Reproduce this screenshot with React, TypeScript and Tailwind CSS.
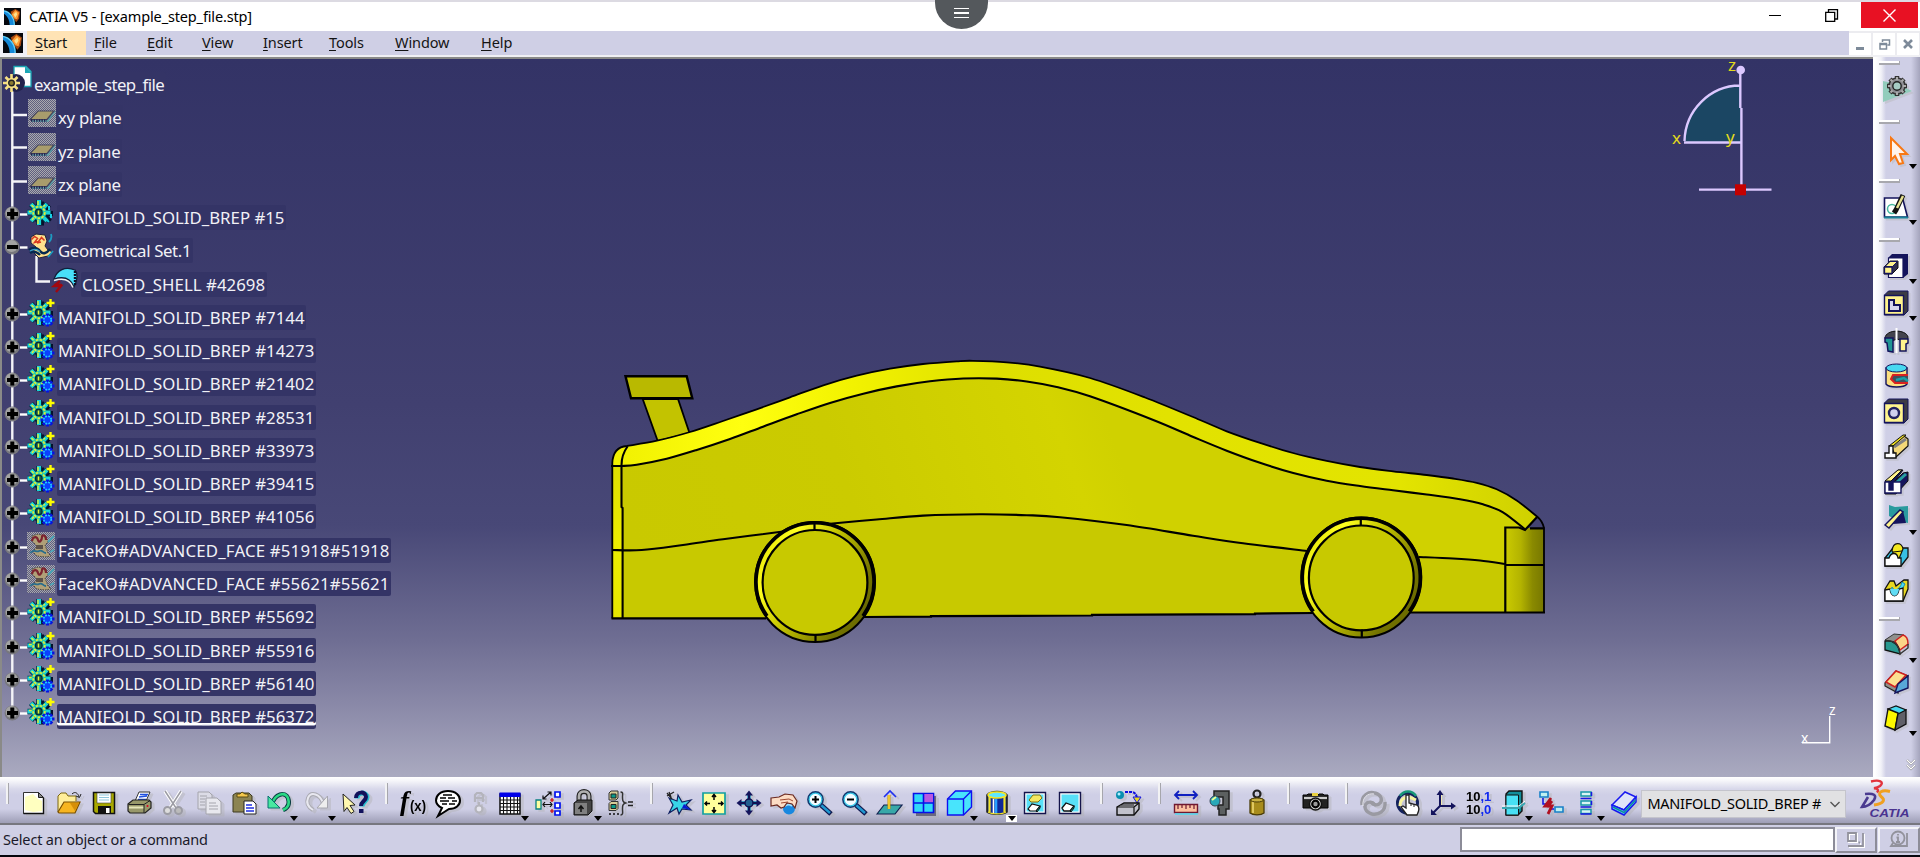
import type { ReactNode } from "react";

type Pt = [number, number];

/* Smooth path through a list of points (Catmull-Rom as cubic Béziers). */
function spline(points: Pt[], start = "M"): string {
  let d = `${start}${points[0][0]} ${points[0][1]}`;
  for (let i = 0; i < points.length - 1; i++) {
    const p0 = points[Math.max(i - 1, 0)];
    const p1 = points[i];
    const p2 = points[i + 1];
    const p3 = points[Math.min(i + 2, points.length - 1)];
    const c1x = p1[0] + (p2[0] - p0[0]) / 6;
    const c1y = p1[1] + (p2[1] - p0[1]) / 6;
    const c2x = p2[0] - (p3[0] - p1[0]) / 6;
    const c2y = p2[1] - (p3[1] - p1[1]) / 6;
    d += `C${c1x} ${c1y} ${c2x} ${c2y} ${p2[0]} ${p2[1]}`;
  }
  return d;
}

const ROOF: Pt[] = [
  [627, 446], [657, 440.7], [690, 432], [723, 421], [756.7, 409.3], [790, 397.3], [823.3, 385.3],
  [856.7, 375.7], [890, 368.7], [923, 364], [956.7, 361.3], [973, 360.8], [1006.7, 362.3],
  [1040, 366.7], [1090, 378], [1145, 397.5], [1200, 420], [1226.7, 431.3], [1260, 442.9],
  [1293, 453], [1326.7, 460.9], [1360, 467], [1393, 471.3], [1426.7, 475], [1453, 478.5],
  [1476.7, 482.8], [1496.7, 489.3], [1516.7, 500.5], [1537.3, 516.7],
];
const SHOULDER: Pt[] = [
  [621.7, 466], [636.7, 464.7], [666.7, 458.7], [696.7, 450], [730, 439], [763, 426.7],
  [796.7, 414.3], [830, 402.9], [863.3, 393.7], [896.7, 386.4], [930, 381.3], [963.3, 378.5],
  [996.7, 378.6], [1026.7, 381.5], [1056.7, 387], [1090, 396.3], [1153.3, 420], [1193.3, 437],
  [1226.7, 450.7], [1260, 462.8], [1293.3, 473], [1326.7, 480.7], [1360, 486], [1393, 490.3],
  [1426.7, 494.5], [1460, 499.2], [1483, 504.3], [1503, 512.3], [1525, 529.3],
];
const WAIST_A: Pt[] = [[612, 550], [641.7, 550], [683, 545], [723, 539.3], [783, 531.5]];
const WAIST_B: Pt[] = [
  [830, 523.8], [876.7, 519.5], [923, 515.6], [980, 514.3], [1026.7, 515.2], [1060, 517.2],
  [1126.7, 525], [1193, 535.7], [1243, 543.3], [1307, 551],
];
const WAIST_C: Pt[] = [[1419, 557], [1453, 558.5], [1480, 560.5], [1505, 564]];

const CORNER = "M612.3 618.3V463Q613 447 627 446";

function Wheel({ cx, cy, bottomGap }: { cx: number; cy: number; bottomGap: number }) {
  return (
    <g fill="none" stroke="#000">
      <circle cx={cx} cy={cy} r={60} fill="url(#tyre)" strokeWidth={2} />
      <path
        d={`M${cx - 48} ${cy + bottomGap}A59 59 0 1 1 ${cx + 48} ${cy + bottomGap}`}
        strokeWidth={3.6}
      />
      <circle cx={cx} cy={cy + 0.4} r={52.4} fill="#c8c900" strokeWidth={2.2} />
      <path d={`M${cx - 0.5} ${cy - 60}v8M${cx + 0.5} ${cy + 52}v8`} strokeWidth={2.2} />
    </g>
  );
}

function Scene() {
  return (
    <svg
      className="absolute left-0 top-0 h-[718px] w-[1871px]"
      viewBox="2 59 1871 718"
      fontFamily="'Noto Sans', sans-serif"
    >
      <defs>
        <linearGradient id="roof" gradientUnits="userSpaceOnUse" x1="612" y1="0" x2="1540" y2="0">
          <stop offset="0" stopColor="#f0f000" />
          <stop offset=".14" stopColor="#ffff10" />
          <stop offset=".26" stopColor="#f2f200" />
          <stop offset=".42" stopColor="#dedf00" />
          <stop offset=".6" stopColor="#e2e200" />
          <stop offset=".85" stopColor="#e3e400" />
          <stop offset="1" stopColor="#cfd000" />
        </linearGradient>
        <linearGradient id="side" gradientUnits="userSpaceOnUse" x1="640" y1="560" x2="1100" y2="400">
          <stop offset="0" stopColor="#c9c900" />
          <stop offset=".45" stopColor="#cbcb00" />
          <stop offset=".9" stopColor="#d4d400" />
          <stop offset="1" stopColor="#d0d100" />
        </linearGradient>
        <linearGradient id="nose" x1="0" x2="1" y1="0" y2="0">
          <stop offset="0" stopColor="#cbcb00" />
          <stop offset=".4" stopColor="#b3b300" />
          <stop offset=".7" stopColor="#8a8a00" />
          <stop offset="1" stopColor="#777700" />
        </linearGradient>
        <linearGradient id="tyre" x1="0" x2="1" y1=".2" y2=".8">
          <stop offset="0" stopColor="#e0e000" />
          <stop offset=".2" stopColor="#ffff20" />
          <stop offset=".45" stopColor="#c4c400" />
          <stop offset=".8" stopColor="#747400" />
          <stop offset="1" stopColor="#666600" />
        </linearGradient>
        <linearGradient id="rear" x1="0" x2="0" y1="0" y2="1">
          <stop offset="0" stopColor="#dede00" />
          <stop offset=".5" stopColor="#ecec00" />
          <stop offset="1" stopColor="#e6e600" />
        </linearGradient>
      </defs>

      {/* spoiler */}
      <g stroke="#000" strokeWidth="2.4">
        <path d="M642.7 399L657.7 441L689.5 433L678 399Z" fill="#c3c300" strokeWidth="1.8" />
        <path d="M625.5 376.3H686.7L692.3 398.3H631Z" fill="#b9b900" />
      </g>

      {/* body */}
      <path
        d={`${CORNER}${spline(ROOF, "L")}L1525 529.5L1544 528V612.4L1312 612.8L1255 614L1090 615.3L932 616.3L863 617L612.3 618.3Z`}
        fill="url(#roof)"
      />
      <path
        d={`${spline(SHOULDER)}L1505 528V612.5L1312 612.8L1090 615.3L863 617L622 618.3Z`}
        fill="url(#side)"
      />
      <path
        d={`${spline(WAIST_A)}L${WAIST_B[0].join(" ")}${spline(WAIST_B, "L")}L1419 557${spline(WAIST_C, "L")}V612.5L1312 612.8L1090 615.3L863 617L622 618.3V550Z`}
        fill="#c8c900"
      />
      <path d="M612.3 466H622V618.3H612.3Z" fill="url(#rear)" />
      <path d="M1505.3 528H1544V612.4H1505.3Z" fill="url(#nose)" />
      <path d="M1528 527.5L1537.3 517L1543.5 527.5Z" fill="#444473" />

      <g fill="none" stroke="#000" strokeWidth="2.1">
        <path d={`${CORNER}${spline(ROOF, "L")}Q1542.5 521 1544 528V612.4`} strokeWidth="1.8" />
        <path d={spline(SHOULDER)} />
        <path d={spline(WAIST_A)} />
        <path d={spline(WAIST_B)} />
        <path d={spline(WAIST_C)} />
        <path d="M611 466H622M627.500 446.500Q621.300 455 621.500 466V507L622.600 508V618" />
        <path
          d="M611.5 618.3H766M863 617L931 616.6V616.2L1092 615.5V614.8L1255 614.2V613.6L1314 613M1410 612.5H1545"
          strokeWidth="2.2"
        />
        <path d="M1505.3 612V527.5H1519L1525 530L1537.3 516.7M1530 528.3H1544.5M1505 565H1544" strokeWidth="2.2" />
      </g>

      <Wheel cx={815} cy={582} bottomGap={34} />
      <Wheel cx={1361.3} cy={577.5} bottomGap={34} />

      {/* compass */}
      <path d="M1740 85.5A56 57 0 0 0 1684.5 142.3H1741Z" fill="#1b4663" />
      <g stroke="#dcc8ff" fill="none" strokeWidth="2.4">
        <path d="M1740 85.5A56 57 0 0 0 1684.5 141M1684 142.5H1741M1740.3 70V108M1741.4 108V186" />
        <path d="M1699 189.6H1771.5" />
      </g>
      <circle cx="1740.7" cy="70" r="4.3" fill="#dcc8ff" />
      <rect x="1735" y="184.3" width="11" height="11" fill="#c40000" />
      <g fill="#e2da1c" fontSize="17">
        <text x="1728" y="71">z</text>
        <text x="1672" y="143.5">x</text>
        <text x="1726" y="143">y</text>
      </g>

      {/* view axes */}
      <path d="M1802 742.7H1829.7V716" fill="none" stroke="#fff" strokeWidth="1.4" />
      <g fill="#fff" fontSize="14">
        <text x="1829" y="714.5">z</text>
        <text x="1801" y="743">x</text>
      </g>

      {/* tree trunk and branches */}
      <g stroke="#f4f4f8" strokeWidth="2.4" fill="none">
        <path d="M12.3 90V713" />
        <path d="M12 115H27M12 147.5H27M12 181.5H27" />
        <path d="M36.5 256V281.5H50" />
      </g>
    </svg>
  );
}

/* ---------- tree ---------- */

function Svg({ children, size = "h-6 w-6", box = "0 0 24 24" }: { children: ReactNode; size?: string; box?: string }) {
  return (
    <svg viewBox={box} className={`${size} shrink-0 overflow-visible`} fill="none" stroke="none">
      {children}
    </svg>
  );
}

const BODY_TEETH = "M11 0v25M-.5 12.500h23M3 4l16 17M19 4L3 21";

function BodyIcon({ plus }: { plus?: boolean }) {
  return (
    <Svg size="h-[26px] w-[27px]" box="0 0 27 26">
      <g stroke="#04122c" strokeWidth="5" transform="translate(2.500 .5)">
        <path d="M11 1v24M1.500 13h21M4.500 5l15 16M18.500 4.500L5 21" />
      </g>
      <path d={BODY_TEETH} stroke="#063044" strokeWidth="5.600" />
      <path d={BODY_TEETH} stroke="#18d4d8" strokeWidth="4" />
      <path d="M10 1v5M1 11.500h5M3.500 5l4 4M17 5l-4 4M4 20l3-4M10 19v5" stroke="#e4ee30" strokeWidth="1.400" />
      <circle cx="11" cy="12.500" r="7.400" fill="#20c8b0" />
      <circle cx="11" cy="12.500" r="5.800" stroke="#e8ee30" strokeWidth="1.700" strokeDasharray="2.500 1.400" />
      <circle cx="10.800" cy="12.500" r="3.300" fill="#0d5c48" stroke="#062838" strokeWidth="1.300" />
      <path d="M10.500 10.500v4" stroke="#e8ee30" strokeWidth="1.500" />
      {plus ? (
        <g>
          <path d="M19.500 13.500v13M12.500 20h14M14.900 15.300l9.200 9.400M24.100 15.300l-9.200 9.400" stroke="#0614e0" strokeWidth="3.200" />
          <circle cx="19.500" cy="20" r="3.800" fill="#0a40ff" stroke="#22c8ff" strokeWidth="1.700" strokeDasharray="2 1" />
          <path d="M22.500 -1v8M18.500 3h8" stroke="#ffff00" strokeWidth="2.400" />
        </g>
      ) : (
        <path d="M21 6v4M23 14v4M19 20l2 2" stroke="#18d0e8" strokeWidth="2" />
      )}
    </Svg>
  );
}

function Dither({ children }: { children: ReactNode }) {
  return (
    <Svg size="h-[28px] w-[28px]" box="0 0 28 28">
      <defs>
        <pattern id="dither" width="2" height="2" patternUnits="userSpaceOnUse">
          <rect width="2" height="2" fill="#5f5f80" />
          <rect width="1" height="1" fill="#a9a9ad" />
          <rect x="1" y="1" width="1" height="1" fill="#a9a9ad" />
        </pattern>
      </defs>
      <rect width="28" height="28" fill="url(#dither)" />
      {children}
    </Svg>
  );
}

function PlaneIcon() {
  return (
    <Dither>
      <path d="M3 22h17l7-10" stroke="#58a0a8" strokeWidth="1.500" />
      <path d="M2 20.500L10 12h16l-7 8.500z" fill="#a89c6c" stroke="#44445e" strokeWidth="1.200" />
      <path d="M3 21.500h16" stroke="#20204c" strokeWidth="2.600" strokeDasharray="1.400 1.200" />
    </Dither>
  );
}

function FaceIcon() {
  return (
    <Dither>
      <path d="M5 4l6-2 8 2 2 6-3 3 3 8 3 3-6 1-8-1-4-4 4-6-5-5z" fill="#b0a078" stroke="#4a4640" strokeDasharray="1.500 1" />
      <path d="M5 9c1-5 5-5 6-1s4 0 4-3 4-2 4 3" stroke="#7c2430" strokeWidth="2.200" />
      <path d="M3 21c4-5 6 0 9-2s4 2 7 2" stroke="#276d8c" strokeWidth="1.800" />
      <path d="M9 13h7v4H9z" fill="#5c5048" />
      <path d="M21 10l6-6M23 20l4-2" stroke="#4aa6b8" strokeWidth="1.800" />
    </Dither>
  );
}

function GeoSetIcon() {
  return (
    <Svg size="h-[26px] w-[26px]" box="0 0 26 26">
      <path d="M3 4l5-3 9 1 2 6-2 5 3 4 5 2-5 4-9 2-6-6 3-5-5-4z" fill="#ffe08c" stroke="#22223c" />
      <path d="M3.500 6.500l3-3 3 2-3 4 4-1 3-4 3 3M9 10l4-1" stroke="#d83820" strokeWidth="1.500" />
      <path d="M1 17c3-3 8-3 11 1s7 2 10-2M2 20c4-3 7-1 10 2" stroke="#062a50" strokeWidth="2.400" />
      <path d="M2 18c3-2 7-2 10 .5" stroke="#36a0c8" strokeWidth="1.300" />
      <path d="M21 9c3-3 3-5 2-8M25 18l-5 6" stroke="#1e9ac0" strokeWidth="1.800" />
    </Svg>
  );
}

function ShellIcon() {
  return (
    <Svg size="h-[26px] w-[26px]" box="0 0 26 26">
      <path d="M2 12C5 3 13-1 23 3c3 4 2 11-1 17-3-8-10-11-20-8z" fill="#48e0fa" stroke="#10203c" strokeWidth="1.300" />
      <path d="M2 13.500c10-3 16-1 19 7" stroke="#eee" strokeWidth="1.500" />
      <path d="M23 4v14" stroke="#101028" strokeWidth="2.400" strokeDasharray="2 1" />
      <path d="M8 14l-6 5h7l-5 6M2 18h8" stroke="#a00810" strokeWidth="2.400" />
    </Svg>
  );
}

function RootIcon() {
  return (
    <Svg size="h-[28px] w-[28px]" box="0 0 28 28">
      <path d="M10 .5h12l5 5v15H13l-3-3z" fill="#fff" stroke="#1aa6b4" strokeWidth="1.300" />
      <path d="M21 .5l6.500 6.500H21z" fill="#1aa6b4" />
      <circle cx="12" cy="17" r="9" fill="#23234c" />
      <path d="M7.500 8v18M-1 17h17M1.500 11l12 12M13.500 11l-12 12" stroke="#f6e084" strokeWidth="2.600" />
      <circle cx="7.500" cy="17" r="5.200" fill="#f6e084" />
      <circle cx="7.500" cy="17" r="2.800" fill="#8a7a30" stroke="#222" strokeWidth="1.400" />
    </Svg>
  );
}

function Toggle({ open }: { open?: boolean }) {
  return (
    <div className="flex h-[28px] w-[26px] shrink-0 items-center pl-[2px]">
      <Svg size="h-[16px] w-[24px]" box="0 0 24 16">
        <path d="M16 8.500h7.500" stroke="#fff" strokeWidth="2.400" />
        <circle cx="8.200" cy="8" r="7.600" fill="#77777c" />
        <circle cx="7.600" cy="7" r="6" fill="#a2a2a2" />
        <path d={open ? "M3 8h11" : "M3 8h11M8.300 2.500v11"} stroke="#000" strokeWidth="4" />
      </Svg>
    </div>
  );
}

type Kind = "root" | "plane" | "body" | "bodyPlus" | "geo" | "shell" | "face";
type Node = { label: string; kind: Kind; selected?: boolean };

const TREE: Node[] = [
  { label: "example_step_file", kind: "root" },
  { label: "xy plane", kind: "plane" },
  { label: "yz plane", kind: "plane" },
  { label: "zx plane", kind: "plane" },
  { label: "MANIFOLD_SOLID_BREP #15", kind: "body" },
  { label: "Geometrical Set.1", kind: "geo" },
  { label: "CLOSED_SHELL #42698", kind: "shell" },
  { label: "MANIFOLD_SOLID_BREP #7144", kind: "bodyPlus" },
  { label: "MANIFOLD_SOLID_BREP #14273", kind: "bodyPlus" },
  { label: "MANIFOLD_SOLID_BREP #21402", kind: "bodyPlus" },
  { label: "MANIFOLD_SOLID_BREP #28531", kind: "bodyPlus" },
  { label: "MANIFOLD_SOLID_BREP #33973", kind: "bodyPlus" },
  { label: "MANIFOLD_SOLID_BREP #39415", kind: "bodyPlus" },
  { label: "MANIFOLD_SOLID_BREP #41056", kind: "bodyPlus" },
  { label: "FaceKO#ADVANCED_FACE #51918#51918", kind: "face" },
  { label: "FaceKO#ADVANCED_FACE #55621#55621", kind: "face" },
  { label: "MANIFOLD_SOLID_BREP #55692", kind: "bodyPlus" },
  { label: "MANIFOLD_SOLID_BREP #55916", kind: "bodyPlus" },
  { label: "MANIFOLD_SOLID_BREP #56140", kind: "bodyPlus" },
  { label: "MANIFOLD_SOLID_BREP #56372", kind: "bodyPlus", selected: true },
];

function nodeIcon(kind: Kind) {
  switch (kind) {
    case "root": return <RootIcon />;
    case "plane": return <PlaneIcon />;
    case "body": return <BodyIcon />;
    case "bodyPlus": return <BodyIcon plus />;
    case "geo": return <GeoSetIcon />;
    case "shell": return <ShellIcon />;
    case "face": return <FaceIcon />;
  }
}

const TRACKING: Record<Kind, string> = {
  root: "tracking-[-0.58px]",
  plane: "tracking-[-0.3px]",
  body: "tracking-normal",
  bodyPlus: "tracking-[0.04px]",
  geo: "tracking-[-0.36px]",
  shell: "tracking-[0.05px]",
  face: "tracking-[0.18px]",
};

function TreeRow({ node }: { node: Node }) {
  const { kind } = node;
  const lead =
    kind === "root" ? <div className="w-[2px] shrink-0" />
    : kind === "plane" ? <div className="w-[26px] shrink-0" />
    : kind === "shell" ? <div className="w-[50px] shrink-0" />
    : <Toggle open={kind === "geo"} />;
  return (
    <div className="flex h-[33.28px] items-start">
      {lead}
      <div className={`flex h-[26px] w-[28.500px] shrink-0 items-center ${kind === "face" ? "-ml-[1px] mr-[1px]" : ""}`}>{nodeIcon(kind)}</div>
      <div
        className={`mt-[5px] h-[25px] rounded-[2px] bg-[#343466] px-[1.500px] text-[16.8px] leading-[26px] whitespace-nowrap text-[#f1f1f6] ${TRACKING[kind]} ${node.selected ? "shadow-[inset_0_-3.500px_0_#343466,inset_0_-6px_0_#fff]" : ""}`}
      >
        {node.label}
      </div>
    </div>
  );
}

/* ---------- toolbar glyphs ---------- */

const G = {
  fresh: <g><path d="M1.500 1.500h15l5 5v16h-20z" fill="#fff" stroke="#333" /><path d="M3 6l8-3 5 5 4 2v10l-9 1-8-2z" fill="#ffffc0" /><path d="M16.500 1.500v5h5z" fill="#888" stroke="#222" /><path d="M21.500 7v15.500h-20" stroke="#111" strokeWidth="1.400" /></g>,
  open: <g><path d="M1 21V5l3-3h5l2 3h8v5" fill="#ffee9a" stroke="#7a6510" /><path d="M1 21L7 11h16l-5 11H2z" fill="#f7b520" stroke="#7a5000" strokeWidth="1.200" /><path d="M13 12l9 0-4 8" fill="#d68f08" /><path d="M15 3c3-3 6-1 7 3M19 5l3.500 1.500L24 3" stroke="#222" /></g>,
  save: <g><path d="M1.500 1.500h21v21h-19l-2-2z" fill="#a8a800" stroke="#111" strokeWidth="1.500" /><path d="M5 2h14v10H5z" fill="#fff" stroke="#444" strokeWidth=".6" /><path d="M7 4h10M7 6.500h10M7 9h10" stroke="#8fc7dd" /><path d="M6 15h13v7.500H6z" fill="#111" /><path d="M14 17h3.500v5H14z" fill="#fff" /></g>,
  print: <g><path d="M8 10L12 1h11l-4 9z" fill="#fff" stroke="#333" /><path d="M12 6l8-1M13 3.500h8M11 8.300h8" stroke="#2050e0" strokeWidth="1.300" /><path d="M1 13l5-4h16l2 2v6l-6 5H3l-2-2z" fill="#98986a" stroke="#222" strokeWidth="1.200" /><path d="M1.500 13.500H17l6-4" stroke="#222" /><path d="M2 16.500h15" stroke="#e6e6b8" strokeWidth="2" /><path d="M17 14v8" stroke="#222" /><circle cx="20.500" cy="15" r="1" fill="#d02" /></g>,
  cut: <g stroke="#9c9ca4" strokeWidth="1.500"><path d="M3 0l11 17M19 0L8 17" stroke="#fff" strokeWidth="3.600" /><path d="M3 0l11 17M19 0L8 17" /><circle cx="5.500" cy="19.500" r="3.500" fill="#ddd" strokeWidth="2" /><circle cx="16.500" cy="19.500" r="3.500" fill="#bbb" strokeWidth="2" /></g>,
  copy: <g stroke="#a4a4ac" fill="#dcdce6"><path d="M1 1h11l3 3v14H1z" /><path d="M9 7h11l4 4v12H9z" fill="#e8e8ee" /><path d="M3 5h7M3 8h5M3 11h5M3 14h5M12 12h7M12 15h9M12 18h9" /></g>,
  paste: <g><path d="M1 4l3-2h13l3 3v14l-3 2H1z" fill="#8c8452" stroke="#3c3820" /><path d="M5 6V3h3l2-2 3 2h3v3z" fill="#f5c84c" stroke="#5a4a10" /><path d="M12 10h9l3 3v10H12z" fill="#fff" stroke="#222" /><path d="M14 14h6M14 17h8M14 20h8" stroke="#2030e0" strokeWidth="1.300" /></g>,
  undo: <g><path d="M5 13C8 3 18 0 21 7c2 6 0 10-5 12" stroke="#073c40" strokeWidth="4.400" /><path d="M5 13C8 3 18 0 21 7c2 6 0 10-5 12" stroke="#2ad884" strokeWidth="2.600" /><path d="M1 5v12h12z" fill="#48e8a0" stroke="#087070" /></g>,
  redo: <g stroke="#a6a6ae"><path d="M18 12C15 3 6 0 3 7c-2 5 0 9 5 12" stroke="#aaaab2" strokeWidth="4" /><path d="M18 12C15 3 6 0 3 7c-2 5 0 9 5 12" stroke="#e8e8f0" strokeWidth="2" /><path d="M22.500 5v12H12z" fill="#eee" /></g>,
  help: <g><path d="M0 3l12 11-5 .5 4 6-3 2-4-6-3 4z" fill="#fff8b0" stroke="#222" /><path d="M13 7c0-7 10-7 10-1 0 4-5 4-5 9" stroke="#26c0d0" strokeWidth="5" transform="translate(1 .5)" /><path d="M13 7c0-7 10-7 10-1 0 4-5 4-5 9" stroke="#12125c" strokeWidth="4" /><path d="M16 18h4.500v4H16z" fill="#12125c" /></g>,
  fx: <g fill="#000"><text x="-1" y="19" fontSize="27" fontStyle="italic" fontWeight="700" fontFamily="'Liberation Serif', serif">f</text><text x="9" y="20" fontSize="15" fontWeight="700" fontFamily="'Liberation Sans', sans-serif" textLength="16" lengthAdjust="spacingAndGlyphs">(x)</text></g>,
  chat: <g><path d="M12 0c8 0 12 5 12 9.500S20 18 13 18L2 25l4-8C2 15 0 13 0 9.500 0 5 4 0 12 0z" fill="#fff" stroke="#000" strokeWidth="2" /><path d="M7 4h9M4 7h6M12 7h7M4 10h9M16 10h5M6 13h5M13 13h6" stroke="#000" strokeWidth="1.300" /></g>,
  linkOff: <g stroke="#b4b4bc" strokeWidth="2.200"><path d="M8 11V4l2-2h4l2 2v7M9 7h6M12 11v5" /><circle cx="12" cy="18" r="3.500" fill="#e6e6ee" /></g>,
  table: <g><path d="M2 3h20v20H2z" fill="#fff" stroke="#111" strokeWidth="1.500" /><path d="M1.500 1.500h21v4.500h-21z" fill="#0000e8" /><path d="M2 9h20M2 12.500h20M2 16h20M2 19.500h20M5.500 6v17M9 6v17M12.500 6v17M16 6v17M19.500 6v17" stroke="#111" strokeWidth="1.100" /></g>,
  relations: <g><path d="M0 9h5v9H0z" fill="#ffffa0" stroke="#0a8080" strokeWidth="1.300" /><path d="M7 13.500h9M9 11l-2 2.500L9 16M14 11l2 2.500L14 16M7 8l8-7M7 4.500V8h3.500M11.500 1H15v3.500" stroke="#111" strokeWidth="1.200" /><path d="M19 1h5v5h-5zM19 12h5v5h-5zM19 20h5v4h-5z" fill="#fff" stroke="#0010f0" strokeWidth="1.700" /><path d="M14 9h4M16 7v4M14 20h4M16 18v4" stroke="#c00" strokeWidth="1.200" /></g>,
  lock: <g><path d="M8 11V5c0-6 10-6 10 0v6" stroke="#222" strokeWidth="5" /><path d="M8 11V5c0-6 10-6 10 0v6" stroke="#b0b0b0" strokeWidth="2.700" /><path d="M3 12l4-3h14v11l-4 4H3z" fill="#454545" stroke="#111" /><path d="M4 12h12v11H4z" fill="#808080" /><path d="M10 15v6M7.500 18L10 15l2.500 3" stroke="#111" strokeWidth="1.500" /></g>,
  formula: <g><path d="M1 2l2-2h7v7l-2 2H1zM1 12.500l2-2h7v7l-2 2H1z" fill="#d6cd98" stroke="#333" /><path d="M3 3h5v4H3zM3 13.500h5v4H3z" fill="#0a9a88" stroke="#222" /><path d="M1 23h2M5 23h2M9 23h2" stroke="#111" strokeWidth="1.500" /><path d="M12.500 1c3 0 2 2 2 5s0 5 3 6c-3 1-3 3-3 6s1 6-2 6" stroke="#333" strokeWidth="1.500" /><path d="M20 11h5M20 14.500h5" stroke="#222" strokeWidth="1.500" /></g>,
  plane: <g><path d="M2 7l8 3 1-6 4 7 9-2-5 5 5 5-9-1-3 5-2-6-8 5 4-8z" fill="#38d4e8" stroke="#102060" strokeWidth="1.200" /><path d="M17 13l7 6-9-2z" fill="#0a18d0" /><path d="M0 2l5 6M0 5l7-4M2 1l2 5" stroke="#222" strokeWidth="1.300" /></g>,
  fit: <g><path d="M1 2h22v21H1z" fill="#ffff9c" stroke="#12a0a0" strokeWidth="1.700" /><path d="M12 4v5M12 16v5M3 12.500h5M16 12.500h5M10 6l2-2.500L14 6M10 19l2 2.500 2-2.500M5 10.500L3 12.500l2 2M19 10.500l2 2-2 2" stroke="#000" strokeWidth="1.500" /></g>,
  pan: <g><path d="M12 2v20M2 12h20" stroke="#1090b8" strokeWidth="3.400" /><path d="M12 2v20M2 12h20" stroke="#101050" strokeWidth="2" /><path d="M12-.5l4 5H8zM12 24.500l4-5H8zM-.5 12l5-4v8zM24.500 12l-5-4v8z" fill="#14145c" /><circle cx="12" cy="12" r="4" fill="#226090" stroke="#101050" strokeWidth="1.500" /></g>,
  rotate: <g><circle cx="17" cy="17.500" r="6" fill="#1888e0" /><path d="M13 15c2-2 5-2 7 0" stroke="#a0e0ff" strokeWidth="2" /><path d="M-1 7l8-1 6-3 8 1 4 6-2 7-3-4-5-1-3 4-3 1-4-3-6 1z" fill="#fcdcc4" stroke="#6a2820" strokeWidth="1.200" /><path d="M8 9l9-1 4 2M9 12l7-1" stroke="#a04830" /></g>,
  zoomIn: <g><path d="M14 14l10 9" stroke="#101850" strokeWidth="5" /><path d="M14 14l9 8" stroke="#2098d0" strokeWidth="2.400" /><circle cx="8.500" cy="8.500" r="7.500" fill="#f4fcff" stroke="#123a70" strokeWidth="1.800" /><circle cx="8.500" cy="8.500" r="6.300" stroke="#38c8e8" strokeWidth="1.200" /><path d="M8.500 5v7M5 8.500h7" stroke="#000" strokeWidth="2" /></g>,
  zoomOut: <g><path d="M14 14l10 9" stroke="#101850" strokeWidth="5" /><path d="M14 14l9 8" stroke="#2098d0" strokeWidth="2.400" /><circle cx="8.500" cy="8.500" r="7.500" fill="#f4fcff" stroke="#123a70" strokeWidth="1.800" /><circle cx="8.500" cy="8.500" r="6.300" stroke="#38c8e8" strokeWidth="1.200" /><path d="M5 8.500h7" stroke="#000" strokeWidth="2" /></g>,
  normal: <g><path d="M0 23l7-9h18l-7 9z" fill="#38a8a8" stroke="#102050" strokeWidth="1.200" /><path d="M12 18V4" stroke="#c89000" strokeWidth="3" /><path d="M12 18V4" stroke="#ffe040" strokeWidth="1.400" /><path d="M7 6l6-6 6 6" stroke="#2030f0" strokeWidth="1.600" /></g>,
  views: <g><path d="M4 5h20v20H4z" fill="#6a6a80" /><path d="M1.500 2.500h20v19h-20z" fill="#30d8f8" stroke="#0810e8" strokeWidth="1.600" /><path d="M11.500 3h9.500v8.500h-9.500z" fill="#b858e0" /><path d="M11.500 2v19M2 12h20" stroke="#0810e8" strokeWidth="1.600" /></g>,
  cube: <g stroke="#1010f0" strokeWidth="1.400"><path d="M.5 8l8-8h16v16l-8 8H.5z" fill="#48e4fc" /><path d="M.5 8h16v16M16.500 8l8-8" /></g>,
  shading: <g><path d="M2 4v17c3 3 17 3 20 0V4C18-.5 6-.5 2 4z" fill="#102898" stroke="#222" strokeWidth="1.600" /><path d="M4.500 6v15M19.500 6v15" stroke="#f4e428" strokeWidth="2.200" /><path d="M8.500 8v15" stroke="#fff" strokeWidth="1.600" /><path d="M11 8v15" stroke="#28a0ff" strokeWidth="2.600" /><ellipse cx="12" cy="4" rx="9" ry="3" fill="#60e8ff" stroke="#f4e428" strokeWidth="1.600" /><path d="M3 21c4 2.500 14 2.500 18 0" stroke="#f4e428" strokeWidth="1.400" /></g>,
  hide: <g><path d="M1.500 1.500h21v21h-21z" fill="#fff" stroke="#14144c" strokeWidth="1.400" /><path d="M3.500 3.500h17v17h-17z" fill="#58e0f8" /><path d="M6 9l4-5h7l2 3-4 4H8z" fill="#f4e860" stroke="#807010" /><path d="M5 18l4-5 8 2-4 5H7z" fill="#fff" stroke="#111" strokeWidth="1.200" /><path d="M13 20l4-5v2l-3 4z" fill="#18a090" stroke="#111" /></g>,
  swap: <g><path d="M1.500 1.500h21v21h-21z" fill="#fff" stroke="#14144c" strokeWidth="1.400" /><path d="M3.500 3.500h17v17h-17z" fill="#58e0f8" /><path d="M4 17l4-5 8 3-4 5H6z" fill="#fff" stroke="#111" strokeWidth="1.300" /><path d="M12 20l4-5v2l-3 4z" fill="#18a090" stroke="#111" /></g>,
  material: <g><circle cx="4" cy="4" r="4" fill="#0890b0" /><circle cx="3" cy="3" r="1.500" fill="#b0f0ff" /><path d="M9 1h6c4 0 5 2 6 6" stroke="#1010e0" strokeWidth="2" strokeDasharray="3 1" /><path d="M17 6h8l-4 6z" fill="#e8d820" stroke="#1010e0" /><path d="M1 16l7-4h15v6l-5 6H1z" fill="#c2c2cc" stroke="#111" strokeWidth="1.400" /><path d="M1 16h17v8M18 16l5-4M5 14h13" stroke="#111" strokeWidth="1.200" /></g>,
  measure: <g><path d="M1 4h22M5 0L1 4l4 4M19 0l4 4-4 4" stroke="#1020c0" strokeWidth="1.800" /><path d="M.5 13.500h23v8H.5z" fill="#fcc0a0" stroke="#701830" strokeWidth="1.400" /><path d="M1 23h23" stroke="#50d8f0" strokeWidth="1.500" /><path d="M4 14v4M8 14v3M12 14v4M16 14v3M20 14v4" stroke="#701830" strokeWidth="1.200" /></g>,
  measureItem: <g><path d="M5 0h15v18h-3v6h-7v-6H9v-4h5V6H5z" fill="#5c6060" stroke="#222" strokeWidth="1.500" /><circle cx="6" cy="10" r="5" fill="#28a8b8" stroke="#345" /><path d="M3 9l4-3" stroke="#e8ff90" strokeWidth="2" /></g>,
  weight: <g><circle cx="12" cy="3" r="3.500" stroke="#222" strokeWidth="2.200" /><path d="M5 9c3-2.500 11-2.500 14 0v13c-3 2.500-11 2.500-14 0z" fill="#a88c1c" stroke="#4a3c08" strokeWidth="1.300" /><path d="M8 10v12" stroke="#e0c860" strokeWidth="2" /><ellipse cx="12" cy="9" rx="6.500" ry="2" fill="#c8b040" stroke="#4a3c08" /></g>,
  camera: <g><path d="M0 4h4l1-1h4v1h6l1-1h4l1 1h4v13H0z" fill="#222" stroke="#000" /><path d="M1 7h23" stroke="#ccc" strokeWidth="2.200" /><path d="M9 2h6v3H9z" fill="#e8d040" /><circle cx="12.500" cy="13" r="6" fill="#ddd" stroke="#111" strokeWidth="1.500" /><circle cx="12.500" cy="13" r="3.300" fill="#999" stroke="#000" strokeWidth="2.200" /></g>,
  update: <g stroke="#9a9aa2" strokeWidth="3.400"><path d="M1 14C0 4 8 0 14 2c7 2 8 8 4 11-3 2-8 0-7-3" /><path d="M24 11c1 10-7 13-13 12-7-2-9-8-5-11 3-2 8 0 7 3" /><path d="M2 15c-1-9 5-13 11-12" stroke="#e8e8ee" strokeWidth="1" /></g>,
  manual: <g><circle cx="11.500" cy="12" r="10" stroke="#14225c" strokeWidth="3" /><path d="M4 5c4-6 12-6 16 0" stroke="#189878" strokeWidth="2.400" /><path d="M4 15c0-7 6-12 16-6" stroke="#f8f4a0" strokeWidth="3" /><path d="M10 4h3v8l8 2c3 2 2 6 0 10H11L5 16l2-1 3 2z" fill="#fff" stroke="#222" strokeWidth="1.300" /><path d="M15 12v3M18 13v3" stroke="#222" /></g>,
  axes: <g><path d="M9 15V1M9 15h14M9 15l-8 8" stroke="#14145c" strokeWidth="2" /><path d="M10.500 14V3" stroke="#eee8b0" /><path d="M9-1L5.500 4h7zM25 15l-5-3.500v7zM0 24v-6l6 6z" fill="#14145c" /></g>,
  dims: <g fontFamily="'Liberation Sans', sans-serif" fontWeight="700" fontSize="13"><text x="0" y="10" fill="#000">10<tspan fill="#1028f0">,1</tspan></text><text x="0" y="23" fill="#000">10<tspan fill="#1028f0">,0</tspan></text></g>,
  body: <g><path d="M4 3l3-3h13v20l-4 4H4z" fill="#138e9a" stroke="#111" strokeWidth="1.400" /><path d="M4 4h12.500v20H4z" fill="#48e0f4" stroke="#111" /><path d="M0 17h17l6-5" stroke="#38a8b4" strokeWidth="2" /><path d="M0 15h17l6-5" stroke="#fff" /></g>,
  flash: <g><path d="M1 1h8v5H1zM16 16h8v5h-8z" fill="#c0f0f0" stroke="#1880c8" strokeWidth="1.600" /><path d="M4 7v6h4M11 18h4" stroke="#1818e0" strokeWidth="1.600" /><path d="M12 7l-6 8h7l-4 8M13 10l-5 6" stroke="#b01020" strokeWidth="2.800" /></g>,
  list: <g strokeWidth="1.500"><path d="M7 1h10v4H7zM7 10h10v4H7zM7 18.500h10v4H7z" fill="#d8f4f4" stroke="#1898a8" /><path d="M17.500 1v4M17.500 10v4M6.500 16h11M6.500 7.500h11M6.500 23h11" stroke="#1818e0" /></g>,
  book: <g stroke="#1818f0" strokeWidth="1.500"><path d="M0 14L13 1l11 5-12 13z" fill="#dfe4f8" /><path d="M0 14v4l12 6 12-13V6L12 19z" fill="#68d8f0" /><path d="M1 16l11 5.500L23.500 9" stroke="#0e8ea0" /></g>,
  gear: <g><path d="M-1 7l14 3 15 7-29 11z" fill="#92ccbc" /><path d="M13 2v20M3 12h20M6 5l14 14M20 5L6 19" stroke="#333" strokeWidth="4.500" /><circle cx="13" cy="12" r="8" fill="#8c8c92" stroke="#333" strokeWidth="1.500" /><path d="M13 3v3M13 18v3M4 12h3M19 12h3M6.500 5.500l2 2M17.500 16.500l2 2M19.500 5.500l-2 2M8.500 16.500l-2 2" stroke="#aaa" strokeWidth="2.200" /><circle cx="13" cy="12" r="4.200" fill="#a6ccc4" stroke="#222" strokeWidth="1.400" /></g>,
  arrow: <path d="M7-1v22l4-4 4 8 4-1-3-9h7z" fill="#fff4ec" stroke="#f87814" strokeWidth="2" />,
  sketch: <g><path d="M.5 3h18l5 19H.5z" fill="#fff" stroke="#14145c" strokeWidth="1.600" /><path d="M0 22.500h24" stroke="#1a8298" strokeWidth="2" /><circle cx="8" cy="14" r="4.500" stroke="#48b8a0" strokeWidth="1.500" /><path d="M19 0l-7 15-2 3" stroke="#111" strokeWidth="5" /><path d="M19 1l-6 12" stroke="#e6e090" strokeWidth="2.500" /></g>,
  pad: <g><path d="M4 4l4-4h16v20l-5 4H4z" fill="#14145c" /><path d="M4.500 4H19v19.500H4.500z" fill="#fff" stroke="#14145c" strokeWidth="1.200" /><path d="M0 13l6-6h8v7l-6 6H0z" fill="#30304c" stroke="#111" /><path d="M1 12.500l5-5h7.500l-5 5z" fill="#fff48c" stroke="#14145c" /><path d="M.5 13H8v6.500H.5z" fill="#fff48c" stroke="#14145c" strokeWidth="1.300" /></g>,
  pocket: <g><path d="M.5 4l4-4h19.500v20l-4 4H.5z" fill="#3c3c44" stroke="#14145c" /><path d="M.5 4.500h19v19H.5z" fill="#fff48c" stroke="#14145c" strokeWidth="1.400" /><path d="M5 9h5v5h6v6H5z" fill="#d8d8f0" stroke="#14145c" strokeWidth="2" /></g>,
  shaft: <g><path d="M1 9C2 0 22 0 24 8l-1 5-10-3-10 4z" fill="#44444e" stroke="#111" /><path d="M1 9h8v14l-5-1-1-8-2-1z" fill="#209494" stroke="#14145c" strokeWidth="1.500" /><path d="M16 10h8v4l-2 1v7h-6z" fill="#fff48c" stroke="#14145c" strokeWidth="1.500" /><path d="M12.500-1v25" stroke="#fff" strokeWidth="2" /></g>,
  groove: <g><path d="M2 4v16c3 4 18 4 21 0V4z" fill="#fce080" stroke="#14145c" strokeWidth="1.400" /><ellipse cx="12.500" cy="4" rx="10.500" ry="4" fill="#48d8f0" stroke="#14145c" /><path d="M24 11H9l-2 4 4 4h13" fill="#40505c" stroke="#d82020" strokeWidth="2" /><path d="M12 16l8-2 4 3" stroke="#18a0a8" strokeWidth="2.500" /></g>,
  hole: <g><path d="M.5 4l4-4h19.500v20l-4 4H.5z" fill="#3c3c44" stroke="#14145c" /><path d="M.5 4.500h19v19H.5z" fill="#fff48c" stroke="#14145c" strokeWidth="1.400" /><circle cx="10" cy="14" r="5" fill="#d0d0ee" stroke="#222260" strokeWidth="2.400" /></g>,
  rib: <g><path d="M7 11L20 1l4 3v7L12 22z" fill="#f4d878" stroke="#111" strokeWidth="1.200" /><path d="M10 12l12-8" stroke="#808080" strokeWidth="3" /><path d="M5 11L19 0h3L9 11z" fill="#f0e020" stroke="#111" /><path d="M1 18h4v-7h4v7h3v5H1z" fill="#fff" stroke="#111" strokeWidth="1.400" /></g>,
  slot: <g><path d="M1 12L14 0h5L10 12l9-9 5-1v9L12 24H1z" fill="#14145c" stroke="#111" /><path d="M1 11L14 0h4L7 11z" fill="#fff48c" stroke="#111" /><path d="M12 13l10-9" stroke="#28a0a0" strokeWidth="3" /><path d="M1 12h4v8h4v-8h8v11H1z" fill="#fff" stroke="#14145c" strokeWidth="1.400" /></g>,
  stiffener: <g><path d="M5 0l6 2 13-1v17l-9-2-10-5z" fill="#2a9a9e" /><path d="M4 21L19 6l3 12-13 1z" fill="#14145c" /><path d="M1 20L16 5l3 2L5 23z" fill="#fff48c" stroke="#14145c" strokeWidth="1.400" /></g>,
  solidCombine: <g><path d="M1 15L9 5h15v9l-7 9H1z" fill="#38c0e4" stroke="#111" strokeWidth="1.300" /><path d="M8 8c1-10 10-9 11-2l-5 12z" fill="#f4e820" stroke="#111" strokeWidth="1.200" /><path d="M9 9l9-1" stroke="#111" /><path d="M1 15h4c2-6 8-6 9 0h3v8H1z" fill="#fff" stroke="#111" strokeWidth="1.300" /></g>,
  loft: <g><path d="M1 11L6 3h4l2 5 8-6h4v9l-5 12H1z" fill="#e8d820" stroke="#111" strokeWidth="1.300" /><path d="M8 9c2 5 8 3 10-5l3 2-7 13-7-3z" fill="#48d8f4" stroke="#1890b0" /><path d="M1 12l5-1c1 9 8 9 9 0l4-1v13H1z" fill="#fff" stroke="#111" strokeWidth="1.300" /><path d="M6 11c1 9 8 9 9 0z" fill="#60dcf4" /></g>,
  fillet: <g><path d="M1 7l9-6 10 1-8 7z" fill="#90908c" stroke="#333" /><path d="M11 8l8-6c4 1 5 5 5 9l-8 6z" fill="#fcd488" stroke="#d02020" strokeWidth="1.500" /><path d="M1 8c8-1 14 3 15 13L1 17z" fill="#289890" stroke="#111" strokeWidth="1.300" /><path d="M2 8c7-1 13 3 14 13l8-6v-4" stroke="#333" strokeWidth="1.400" /></g>,
  chamfer: <g><path d="M1 13L12 1l12 5-9 9-1 8-13-7z" fill="#909088" stroke="#222" strokeWidth="1.200" /><path d="M2 12L12 1l10 4L11 17z" fill="#fce090" stroke="#d02020" strokeWidth="1.500" /><path d="M11 23l3-9L24 6v12z" fill="#58a8d8" stroke="#14145c" strokeWidth="1.400" /></g>,
  draft: <g><path d="M4 3l8-3 10 4-7 5z" fill="#48d8f0" stroke="#111" strokeWidth="1.200" /><path d="M4 3l10 4-3 17-10-4z" fill="#fcf800" stroke="#111" strokeWidth="1.400" /><path d="M14 8l8-4v14l-11 6z" fill="#606068" stroke="#111" strokeWidth="1.300" /></g>,
};

type GlyphName = keyof typeof G;

function Caret({ className }: { className: string }) {
  return (
    <svg viewBox="0 0 8 5" className={`absolute h-[5px] w-2 ${className}`}>
      <path d="M0 0h8L4 5z" fill="#000" />
    </svg>
  );
}

function Tool({ name, menu, narrow, boxed }: { name: GlyphName; menu?: boolean; narrow?: boolean; boxed?: boolean }) {
  return (
    <div className={`relative h-[47px] shrink-0 pt-[14px] ${narrow ? "w-[27px]" : menu ? "w-[37.6px]" : "w-[35.08px]"}`}>
      <div className={`flex drop-shadow-[3px_2px_0_rgba(176,176,176,0.4)] ${narrow ? "w-[27px]" : "w-[35px]"} justify-center`}>
        <Svg>{G[name]}</Svg>
      </div>
      {boxed && <div className="absolute left-[27px] top-[38px] h-[7px] w-[11px] bg-white" />}
      {menu && <Caret className="left-[28.500px] top-[39px]" />}
    </div>
  );
}

function Grip() {
  return (
    <div className="flex h-[47px] w-[23.3px] shrink-0 pl-[12.500px] pt-[6px]">
      <div className="h-[21px] w-[3px] border-r border-[#a6a6ac] bg-[#f2f2f4]" />
    </div>
  );
}

function SideTool({ name, menu }: { name: GlyphName; menu?: boolean }) {
  return (
    <div className={`relative flex shrink-0 justify-center pr-[3px] ${menu ? "h-[37.400px]" : "h-[35.300px]"}`}>
      <div className="h-6 drop-shadow-[2px_2px_0_rgba(180,180,180,0.4)]">
        <Svg>{G[name]}</Svg>
      </div>
      {menu && <Caret className="left-[34px] top-[25px]" />}
    </div>
  );
}

function SideGrip() {
  return <div className="ml-[4px] h-1 w-[21px] shrink-0 border-b-2 border-r border-[#a8a8ae] bg-white" />;
}

function AppIcon({ size }: { size: string }) {
  return (
    <Svg size={size} box="0 0 18 18">
      <rect width="18" height="18" fill="#06080e" />
      <path d="M7 4l5-3 5 3-1 7-3 4-4-5z" fill="#a84810" />
      <path d="M8 7l4-5 4 3-2 7-3-1z" fill="#ff9c34" />
      <path d="M10 7l3-3 1 3-2 3z" fill="#ffe08c" />
      <path d="M0 3c6 1 11 7 11 15H6C6 12 3 8 0 6z" fill="#1488d8" />
      <path d="M0 3c6 1 11 7 11 15" stroke="#60d0f8" strokeWidth="1.200" />
    </Svg>
  );
}

const MENUS: { key: string; rest: string; width: string }[] = [
  { key: "S", rest: "tart", width: "w-[59px] bg-[#ffe3b5]" },
  { key: "F", rest: "ile", width: "w-[53px]" },
  { key: "E", rest: "dit", width: "w-[55px]" },
  { key: "V", rest: "iew", width: "w-[61px]" },
  { key: "I", rest: "nsert", width: "w-[66px]" },
  { key: "T", rest: "ools", width: "w-[66px]" },
  { key: "W", rest: "indow", width: "w-[86px]" },
  { key: "H", rest: "elp", width: "w-[60px]" },
];

function TitleBar() {
  return (
    <div className="relative flex h-[31px] items-start border-t-2 border-[#dcdae2] bg-white">
      <div className="flex h-[29px] items-center pl-1">
        <AppIcon size="h-[17px] w-[17px]" />
        <span className="ml-2 text-[14.500px] tracking-[-0.15px] text-black">CATIA V5 - [example_step_file.stp]</span>
      </div>
      <div className="ml-auto flex h-[26px] pr-[2px]">
        <div className="flex w-[52px] items-center justify-center">
          <div className="h-px w-3 bg-black" />
        </div>
        <div className="flex w-[60px] items-center justify-center">
          <Svg size="h-[13px] w-[13px]" box="0 0 13 13">
            <path d="M3.500 3V.7h9V10H10M.7 3.300H9.700V12.300H.7z" stroke="#000" strokeWidth="1.300" />
          </Svg>
        </div>
        <div className="flex w-[57px] items-center justify-center bg-[#e81123]">
          <Svg size="h-[13px] w-[13px]" box="0 0 13 13">
            <path d="M.5.5l12 12M12.500.5l-12 12" stroke="#fff" strokeWidth="1.400" />
          </Svg>
        </div>
      </div>
      <div className="absolute left-[935px] -top-[2px] flex h-[29px] w-[53px] items-center justify-center rounded-b-[27px] bg-[#54585c]">
        <div className="mb-[3px] flex w-[15px] flex-col gap-[3px]">
          <div className="h-[1.500px] bg-white" />
          <div className="h-[1.500px] bg-white" />
          <div className="h-[1.500px] bg-white" />
        </div>
      </div>
    </div>
  );
}

function MenuBar() {
  return (
    <div className="flex h-[26px] border-b-2 border-[#f0f0f4] bg-[#cfcfe5]">
      <div className="flex w-[27px] items-center bg-[#f0f0f6] pl-[1px]">
        <AppIcon size="h-[20px] w-[24px]" />
      </div>
      {MENUS.map((m) => (
        <div key={m.key} className={`flex h-[24px] items-center pl-2 text-[14.500px] tracking-[-0.1px] text-[#141414] ${m.width}`}>
          <span>
            <span className="underline underline-offset-2">{m.key}</span>
            {m.rest}
          </span>
        </div>
      ))}
      <div className="ml-auto flex bg-[#ececf0] pt-[2px]">
        <div className="mr-[2px] flex w-[22px] items-center justify-center bg-white">
          <div className="mt-2 h-[3px] w-2 bg-[#7d8a99]" />
        </div>
        <div className="mr-[2px] flex w-[22px] items-center justify-center bg-white">
          <Svg size="h-[11px] w-[11px]" box="0 0 11 11">
            <path d="M3.500 3V1h7v5H8.500M1 4.500h6.500V10H1zM1 5.500h6.500" stroke="#7d8a99" strokeWidth="1.500" />
          </Svg>
        </div>
        <div className="mr-[1px] flex w-[22px] items-center justify-center bg-white">
          <Svg size="h-[10px] w-[10px]" box="0 0 10 10">
            <path d="M1 1l8 8M9 1L1 9" stroke="#7d8a99" strokeWidth="2.600" />
          </Svg>
        </div>
      </div>
    </div>
  );
}

function SideBar() {
  return (
    <div className="flex w-[47px] shrink-0 flex-col border-l-2 border-white bg-[linear-gradient(90deg,#ffffff_0px,#f2f2f8_6px,#cfcfe6_11px,#cfcfe6_36px,#a4a4bc_45px)] pt-1">
      <div className="h-[59px]"><SideGrip /><div className="h-[9px]" /><SideTool name="gear" /></div>
      <div className="h-[59px]"><SideGrip /><div className="h-[15px]" /><SideTool name="arrow" menu /></div>
      <div className="h-[59px]"><SideGrip /><div className="h-[12px]" /><SideTool name="sketch" menu /></div>
      <div className="flex h-[379px] flex-col">
        <SideGrip />
        <div className="h-[12px] shrink-0" />
        <SideTool name="pad" menu />
        <SideTool name="pocket" menu />
        <SideTool name="shaft" />
        <SideTool name="groove" />
        <SideTool name="hole" />
        <SideTool name="rib" />
        <SideTool name="slot" />
        <SideTool name="stiffener" menu />
        <SideTool name="solidCombine" />
        <SideTool name="loft" />
      </div>
      <SideGrip />
      <div className="h-[12px]" />
      <SideTool name="fillet" menu />
      <SideTool name="chamfer" />
      <SideTool name="draft" menu />
      <div className="mt-[16px] flex justify-end pr-[4px]">
        <Svg size="h-3 w-[10px]" box="0 0 10 12">
          <path d="M1 1l4 4 4-4M1 6l4 4 4-4" stroke="#888890" strokeWidth="2.200" />
          <path d="M1 1l4 4 4-4M1 6l4 4 4-4" stroke="#fff" strokeWidth="1.200" />
        </Svg>
      </div>
    </div>
  );
}

function Logo() {
  return (
    <svg viewBox="0 0 52 40" className="ml-[14px] mt-[2px] h-10 w-[52px] shrink-0 overflow-visible">
      <g fill="none">
        <path d="M11 2.500C19 .5 25 2.500 20 7c-2 1.500-4 2-6 2.300 4 .4 5 1.700 3 4.200" stroke="#e2343c" strokeWidth="2.400" />
        <path d="M5 15c9-1 12 1 9 6-3 4-8 7-12 7l6-10" stroke="#4a3a90" strokeWidth="2.600" />
        <path d="M30 12.500c-8-2-13 1-9 5 4 3 4 7-7 8.500" stroke="#f0a020" strokeWidth="3" />
      </g>
      <text x="9.500" y="37.500" fontSize="11" fontWeight="700" fontStyle="italic" fill="#4a3490" fontFamily="'Liberation Sans', sans-serif" textLength="40" lengthAdjust="spacingAndGlyphs">
        CATIA
      </text>
    </svg>
  );
}

function BottomBar() {
  return (
    <div className="flex h-[48px] border-b-2 border-[#77777f] bg-[linear-gradient(180deg,#ffffff_0px,#f8f8fb_3px,#d8d8ea_12px,#cfcfe6_18px,#cfcfe6_32px,#9e9eb6_46px)]">
      <div className="-ml-[7px] flex shrink-0">
        <Grip />
        <Tool name="fresh" /><Tool name="open" /><Tool name="save" /><Tool name="print" /><Tool name="cut" />
        <Tool name="copy" /><Tool name="paste" /><Tool name="undo" menu /><Tool name="redo" menu /><Tool name="help" />
        <Grip />
        <Tool name="fx" /><Tool name="chat" /><Tool name="linkOff" narrow /><Tool name="table" menu />
        <Tool name="relations" /><Tool name="lock" menu /><Tool name="formula" />
        <Grip />
        <Tool name="plane" /><Tool name="fit" /><Tool name="pan" /><Tool name="rotate" /><Tool name="zoomIn" />
        <Tool name="zoomOut" /><Tool name="normal" /><Tool name="views" /><Tool name="cube" menu />
        <Tool name="shading" menu boxed /><Tool name="hide" /><Tool name="swap" />
        <Grip />
        <Tool name="material" />
        <Grip />
        <Tool name="measure" /><Tool name="measureItem" /><Tool name="weight" />
        <Grip />
        <Tool name="camera" />
        <Grip />
        <Tool name="update" /><Tool name="manual" /><Tool name="axes" /><Tool name="dims" /><Tool name="body" menu />
        <Tool name="flash" /><Tool name="list" menu /><Tool name="book" />
      </div>
      <div className="mt-[13px] flex h-7 w-[205px] shrink-0 items-center border border-[#c4c4cc] bg-[#e1e1e3] pl-[5px] pr-[5px]">
        <span className="flex-1 overflow-hidden text-[14.500px] tracking-[-0.25px] whitespace-nowrap text-black">MANIFOLD_SOLID_BREP #</span>
        <Svg size="h-[7px] w-[10px]" box="0 0 10 7">
          <path d="M.5 1l4.500 4.500L9.500 1" stroke="#555" strokeWidth="1.400" />
        </Svg>
      </div>
      <Logo />
    </div>
  );
}

function StatusBar() {
  return (
    <div className="flex h-[30px] items-center bg-[#cfcfe5] pb-[1px] pl-[3px]">
      <span className="text-[14.500px] tracking-[-0.17px] text-[#1a1a2a]">Select an object or a command</span>
      <div className="ml-auto h-[25px] w-[375px] border-2 border-[#8c8c98] bg-white" />
      <div className="flex h-[26px] w-[42px] items-center justify-center border-2 border-t-[#f4f4f8] border-r-[#8c8c98] border-b-[#8c8c98] border-l-[#f4f4f8]">
        <Svg size="h-5 w-5" box="0 0 20 20">
          <path d="M2 3h8v8H2zM17 3v13H2M13 13h1" stroke="#fff" strokeWidth="2" transform="translate(1 1)" />
          <path d="M2 3h8v8H2zM17 3v13H2M12.500 12.500h1.500" stroke="#92929c" strokeWidth="1.800" />
        </Svg>
      </div>
      <div className="ml-[1px] flex h-[26px] w-[42px] items-center justify-center border-2 border-t-[#f4f4f8] border-r-[#8c8c98] border-b-[#8c8c98] border-l-[#f4f4f8]">
        <Svg size="h-5 w-5" box="0 0 20 20">
          <circle cx="9" cy="8" r="6.500" stroke="#92929c" strokeWidth="1.800" />
          <path d="M9 4v1.500M7.500 7.500H9V12M7 12h4M18 3v13H2l2-3" stroke="#92929c" strokeWidth="1.800" />
        </Svg>
      </div>
    </div>
  );
}

export default function App() {
  return (
    <div className="flex h-[857px] w-[1920px] flex-col overflow-hidden bg-[#05050c] font-['Noto_Sans',sans-serif]">
      <TitleBar />
      <MenuBar />
      <div className="flex h-[720px]">
        <div className="flex flex-1 border-l-2 border-t-2 border-[#8a8a88]">
          <div className="relative flex-1 overflow-hidden bg-[linear-gradient(180deg,#333366_0%,#414070_48%,#484877_65%,#6f6e93_81%,#8a89a8_90%,#aaaac0_100%)]">
            <Scene />
            <div className="relative pt-[8px]">
              {TREE.map((n) => (
                <TreeRow key={n.label} node={n} />
              ))}
            </div>
          </div>
        </div>
        <SideBar />
      </div>
      <BottomBar />
      <StatusBar />
    </div>
  );
}
